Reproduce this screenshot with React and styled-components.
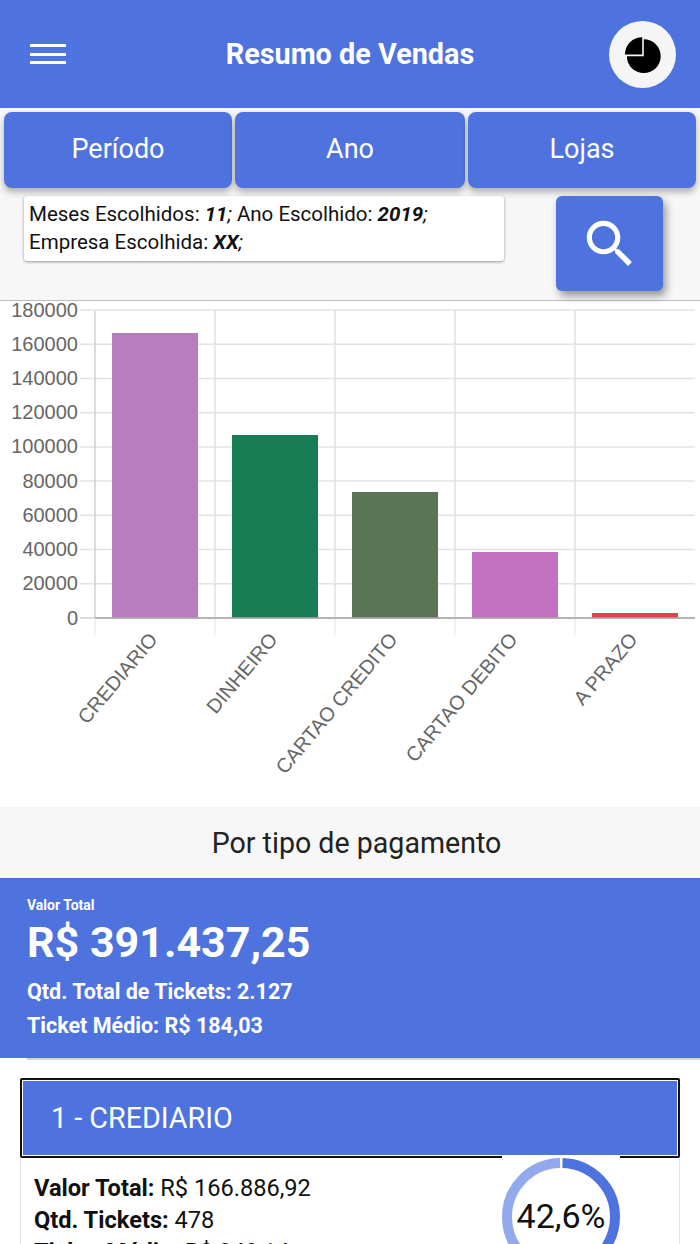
import React from "react";
import styled, { createGlobalStyle } from "styled-components";

const BLUE = "#4E73DF";

const Global = createGlobalStyle`
  html, body { margin: 0; padding: 0; background: #f7f7f7; overflow: hidden; }
  * { box-sizing: border-box; }
`;

const Page = styled.div`
  width: 700px;
  height: 1244px;
  overflow: hidden;
  background: #f7f7f7;
  font-family: Roboto, "Liberation Sans", sans-serif;
`;

const Header = styled.header`
  height: 108px;
  background: ${BLUE};
  display: grid;
  grid-template-columns: 92px 1fr 92px;
  align-items: center;
`;

const MenuButton = styled.div`
  width: 36px;
  height: 20px;
  margin-left: 30px;
  display: flex;
  flex-direction: column;
  justify-content: space-between;
`;

const MenuLine = styled.span`
  display: block;
  height: 3px;
  background: #fff;
`;

const Title = styled.h1`
  margin: 0;
  text-align: center;
  color: #fff;
  font-size: 28.8px;
  font-weight: 700;
  line-height: 1;
`;

const AvatarButton = styled.div`
  width: 67px;
  height: 67px;
  margin: 1px 0 0 1px;
  border-radius: 50%;
  background: #f5f5f5;
  display: flex;
  align-items: center;
  justify-content: center;
`;

const Tabs = styled.nav`
  display: grid;
  grid-template-columns: 228px 230px 228px;
  gap: 3px;
  padding: 4px 4px 0;
`;

const Tab = styled.div`
  height: 76px;
  padding-bottom: 2px;
  background: ${BLUE};
  color: #fff;
  border-radius: 8px;
  box-shadow: 0 4px 7px rgba(0, 0, 0, 0.3);
  display: flex;
  align-items: center;
  justify-content: center;
  font-size: 27px;
`;

const FilterRow = styled.section`
  height: 113px;
  padding: 8px 37px 0 24px;
  display: flex;
  justify-content: space-between;
  align-items: flex-start;
  border-bottom: 1px solid #bdbdbd;
`;

const InfoCard = styled.div`
  width: 480px;
  height: 65px;
  padding: 5px 5px;
  background: #fff;
  border-radius: 3px;
  box-shadow: 0 1px 3px rgba(0, 0, 0, 0.4);
  color: #111;
  font-size: 20.5px;
  line-height: 27.5px;
`;

const Strong = styled.b`
  font-style: italic;
  font-weight: 700;
`;

const Em = styled.i``;

const SearchButton = styled.div`
  width: 107px;
  height: 95px;
  background: ${BLUE};
  border-radius: 6px;
  box-shadow: 3px 5px 9px rgba(0, 0, 0, 0.4);
  display: flex;
  align-items: center;
  justify-content: center;
`;

const ChartPanel = styled.section`
  height: 506px;
  background: #fff;
`;

const ChartSvg = styled.svg`
  display: block;
`;

const SectionTitle = styled.h2`
  margin: 0;
  height: 71px;
  display: flex;
  align-items: center;
  justify-content: center;
  padding-left: 13px;
  font-size: 28.6px;
  font-weight: 400;
  color: #222;
`;

const Totals = styled.section`
  height: 180px;
  background: ${BLUE};
  color: #fff;
  padding: 19px 27px 0;
`;

const TotalLabel = styled.div`
  font-size: 14px;
  font-weight: 700;
  line-height: 16px;
`;

const TotalValue = styled.div`
  font-size: 43px;
  font-weight: 700;
  line-height: 58px;
  margin-bottom: 4px;
`;

const TotalLine = styled.div`
  font-size: 21.5px;
  font-weight: 700;
  line-height: 34px;
`;

const LowerPanel = styled.section`
  height: 186px;
  background: #fff;
  padding: 20px 20px 0;
  position: relative;
`;

const Rule = styled.div`
  position: absolute;
  top: 0;
  left: 27px;
  right: 0;
  height: 2px;
  background: #d4d4d4;
`;

const Card = styled.article`
  width: 660px;
  border: 1px solid #e2e2e2;
  border-top: 0;
  background: #fff;
`;

const CardHeader = styled.div`
  height: 80px;
  margin: 0 -1px;
  border: 2px solid #111;
  border-radius: 2px;
  background: ${BLUE};
  box-shadow: inset 0 0 0 1px #fff;
  color: #fff;
  font-size: 28.7px;
  display: flex;
  align-items: center;
  padding-left: 29px;
`;

const CardBody = styled.div`
  display: grid;
  grid-template-columns: 468px 118px;
  padding-left: 13px;
`;

const Metrics = styled.div`
  padding-top: 14px;
  font-size: 23.6px;
  line-height: 32px;
  color: #111;
`;

const MetricLabel = styled.b`
  font-weight: 700;
`;

const Donut = styled.div`
  position: relative;
  width: 118px;
  height: 120px;
  margin-top: -2px;
  background: #fff;
  display: flex;
  align-items: center;
  justify-content: center;
`;

const DonutSvg = styled.svg`
  position: absolute;
  left: 0;
  top: 2px;
`;

const DonutLabel = styled.span`
  font-size: 34px;
  color: #111;
  position: relative;
`;

const bars = [
  { name: "CREDIARIO", x: 112, top: 333, color: "#B97CBD", lx: 157 },
  { name: "DINHEIRO", x: 232, top: 435, color: "#187C55", lx: 277 },
  { name: "CARTAO CREDITO", x: 352, top: 492, color: "#5A7553", lx: 397 },
  { name: "CARTAO DEBITO", x: 472, top: 552, color: "#C272C0", lx: 517 },
  { name: "A PRAZO", x: 592, top: 613, color: "#E5404F", lx: 637 },
];
const ticks = [180000, 160000, 140000, 120000, 100000, 80000, 60000, 40000, 20000, 0];
const OFFSET = 301;
const y0 = 618 - OFFSET;
const step = 308 / 9;

function Chart() {
  return (
    <ChartSvg width="700" height="506" viewBox="0 0 700 506">
      {ticks.map((t, i) => {
        const y = y0 - (9 - i) * step;
        return (
          <g key={t}>
            <line x1="80" x2="695" y1={y} y2={y} stroke={t === 0 ? "#cfcfcf" : "#e2e2e2"} strokeWidth="1.5" />
            <text x="78" y={y + 6.5} textAnchor="end" fontFamily="Liberation Sans" fontSize="20" fill="#666">{t}</text>
          </g>
        );
      })}
      {[95, 215, 335, 455, 575].map((x, i) => (
        <g key={x}>
          <line x1={x} x2={x} y1="10" y2={y0} stroke={i === 0 ? "#cfcfcf" : "#e0e0e0"} strokeWidth="1.5" />
          <line x1={x} x2={x} y1={y0} y2="334" stroke="#ececec" strokeWidth="1.5" />
        </g>
      ))}
      {bars.map((b) => (
        <rect key={b.name} x={b.x} y={b.top - OFFSET} width="86" height={618 - b.top} fill={b.color} />
      ))}
      <line x1="95" x2="695" y1={y0} y2={y0} stroke="#a8a8a8" strokeWidth="1.5" />
      {bars.map((b) => (
        <text
          key={b.name}
          x="0"
          y="0"
          transform={`translate(${b.lx + 1.5} ${339}) rotate(-50)`}
          textAnchor="end"
          fontFamily="Liberation Sans"
          fontSize="20"
          fill="#666"
        >
          {b.name}
        </text>
      ))}
    </ChartSvg>
  );
}

export default function App() {
  const r = 54;
  const c = 2 * Math.PI * r;
  const gap = 3;
  const part = 0.426 * c;
  return (
    <Page>
      <Global />
      <Header>
        <MenuButton>
          <MenuLine />
          <MenuLine />
          <MenuLine />
        </MenuButton>
        <Title>Resumo de Vendas</Title>
        <AvatarButton>
          <svg width="40" height="40" viewBox="0 0 40 40">
            <path d="M20.800 4.300A16.900 16.900 0 1 1 3.900 21.200H20.800z" fill="#000" />
            <path d="M19.200 2.200A17.300 17.300 0 0 0 1.900 19.500H19.200z" fill="#000" />
          </svg>
        </AvatarButton>
      </Header>
      <Tabs>
        <Tab>Período</Tab>
        <Tab>Ano</Tab>
        <Tab>Lojas</Tab>
      </Tabs>
      <FilterRow>
        <InfoCard>
          Meses Escolhidos: <Strong>11</Strong><Em>;</Em> Ano Escolhido: <Strong>2019</Strong><Em>;</Em>
          <br />
          Empresa Escolhida: <Strong>XX</Strong><Em>;</Em>
        </InfoCard>
        <SearchButton>
          <svg width="62" height="62" viewBox="0 0 24 24" fill="#fff">
            <path d="M15.500 14h-.79l-.28-.27C15.410 12.590 16 11.110 16 9.500 16 5.910 13.090 3 9.500 3S3 5.910 3 9.500 5.910 16 9.500 16c1.610 0 3.090-.59 4.230-1.570l.27.28v.79l5 4.990L20.490 19l-4.990-5zm-6 0C7.010 14 5 11.990 5 9.500S7.010 5 9.500 5 14 7.010 14 9.500 11.990 14 9.500 14z" />
          </svg>
        </SearchButton>
      </FilterRow>
      <ChartPanel>
        <Chart />
      </ChartPanel>
      <SectionTitle>Por tipo de pagamento</SectionTitle>
      <Totals>
        <TotalLabel>Valor Total</TotalLabel>
        <TotalValue>R$ 391.437,25</TotalValue>
        <TotalLine>Qtd. Total de Tickets: 2.127</TotalLine>
        <TotalLine>Ticket Médio: R$ 184,03</TotalLine>
      </Totals>
      <LowerPanel>
        <Rule />
        <Card>
          <CardHeader>1 - CREDIARIO</CardHeader>
          <CardBody>
            <Metrics>
              <div><MetricLabel>Valor Total:</MetricLabel> R$ 166.886,92</div>
              <div><MetricLabel>Qtd. Tickets:</MetricLabel> 478</div>
              <div><MetricLabel>Ticket Médio:</MetricLabel> R$ 349,14</div>
            </Metrics>
            <Donut>
              <DonutSvg width="118" height="118" viewBox="0 0 118 118">
                <g transform="rotate(-90 59 59)" fill="none" strokeWidth="10">
                  <circle cx="59" cy="59" r={r} stroke="#92A9EC" strokeDasharray={`${c - part - gap} ${part + gap}`} strokeDashoffset={-(part + gap / 2)} />
                  <circle cx="59" cy="59" r={r} stroke={BLUE} strokeDasharray={`${part} ${c - part}`} strokeDashoffset={-gap / 2} />
                </g>
              </DonutSvg>
              <DonutLabel>42,6%</DonutLabel>
            </Donut>
          </CardBody>
        </Card>
      </LowerPanel>
    </Page>
  );
}
